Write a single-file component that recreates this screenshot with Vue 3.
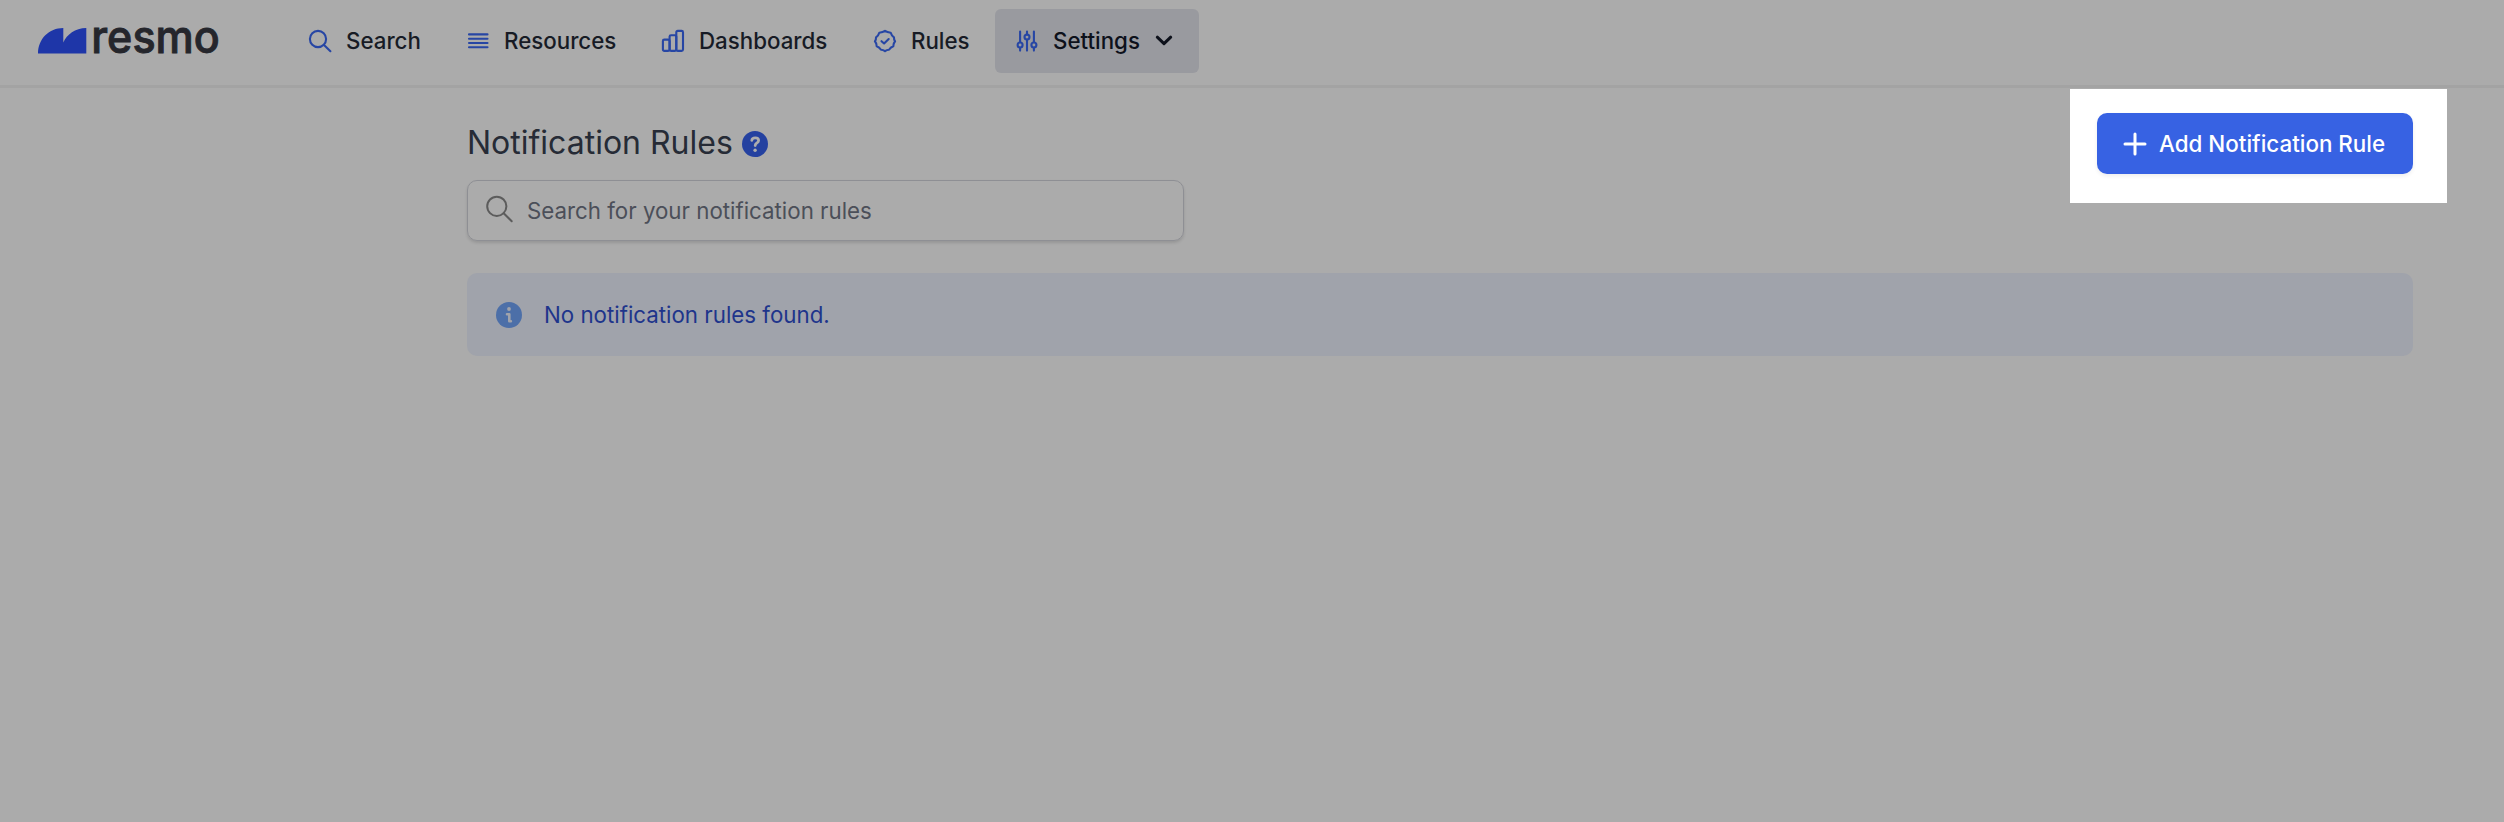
<script setup>
const nav = [
  { id: 'search', label: 'Search' },
  { id: 'resources', label: 'Resources' },
  { id: 'dashboards', label: 'Dashboards' },
  { id: 'rules', label: 'Rules' },
  { id: 'settings', label: 'Settings' },
]
</script>

<template>
  <div class="page">
    <header class="header">
      <svg class="logo" width="190" height="72" viewBox="0 0 190 72">
        <path d="M0 53.5C0 39 11 28 25.300 28V42.500C29 34.500 37 28 48.300 28V53.500Z" fill="#1e36a8" />
        <text x="53.300" y="53.400" textLength="128.500" lengthAdjust="spacingAndGlyphs">resmo</text>
      </svg>
      <nav class="nav">
        <a v-for="item in nav" :key="item.id" class="item" :class="item.id">
          <svg v-if="item.id === 'search'" class="icon" viewBox="0 0 24 24">
            <circle cx="10" cy="10" r="8.1" /><path d="M16 16l6.4 6.2" />
          </svg>
          <svg v-else-if="item.id === 'resources'" class="icon" viewBox="0 0 24 24">
            <path d="M3 5.400h18.500M3 9.700h18.500M3 14h18.500M3 18.300h18.500" />
          </svg>
          <svg v-else-if="item.id === 'dashboards'" class="icon" viewBox="0 0 24 24">
            <rect x="1.9" y="10.6" width="6.7" height="11.3" rx="1.4" />
            <rect x="8.6" y="6.2" width="6.7" height="15.7" rx="1.4" />
            <rect x="15.3" y="1.9" width="6.7" height="20" rx="1.4" />
          </svg>
          <svg v-else-if="item.id === 'rules'" class="icon" viewBox="0 0 24 24">
            <path d="M12 1.900Q14 3.400 17.700 3.700Q18.500 6.500 21 8.300Q20.800 10.500 22.100 12.300Q20.300 14.400 20.300 17.300Q17.600 18.200 16 20.700Q13.800 20.700 12 22.100Q10.200 20.700 8 20.700Q6.400 18.200 3.700 17.300Q3.700 14.400 1.900 12.300Q3.200 10.500 3 8.300Q5.500 6.500 6.300 3.700Q10 3.400 12 1.900Z" />
            <path d="M8.500 12.200l2.600 2.300 4.600-4.500" />
          </svg>
          <svg v-else class="icon" viewBox="0 0 24 24">
            <path d="M5.100 2.500V13M5.100 19v2.600M12 2.500V5.200M12 11v10.600M18.900 2.500V13M18.900 19v2.600" />
            <circle cx="5.100" cy="16" r="2.500" /><circle cx="12" cy="8.100" r="2.500" /><circle cx="18.900" cy="16" r="2.500" />
          </svg>
          <span class="label">{{ item.label }}</span>
          <svg v-if="item.id === 'settings'" class="chevron" width="18" height="12" viewBox="0 0 18 12">
            <path d="M2.300 2.200L9 8.700L15.700 2.200" />
          </svg>
        </a>
      </nav>
    </header>

    <main class="main">
      <div class="top">
        <div class="intro">
          <h1>
            <span>Notification Rules</span>
            <svg class="help" width="26" height="26" viewBox="0 0 26 26">
              <circle cx="13" cy="13" r="13" fill="#2441a0" />
              <path d="M9.800 9.300C10.200 6 16.600 6 16.600 9.400C16.600 12 13.200 11.800 13.200 14.500" fill="none" stroke="#adadad" stroke-width="2.800" stroke-linecap="round" />
              <circle cx="13.100" cy="19.300" r="1.700" fill="#adadad" />
            </svg>
          </h1>
          <div class="search-box">
            <svg width="28" height="28" viewBox="0 0 28 28">
              <circle cx="10.800" cy="11.300" r="9.600" /><path d="M17.700 18.200L25.700 26.200" />
            </svg>
            <span>Search for your notification rules</span>
          </div>
        </div>
        <div class="spotlight">
          <button class="add">
            <svg width="24" height="24" viewBox="0 0 24 24"><path d="M12 2v20M2 12h20" /></svg>
            <span>Add Notification Rule</span>
          </button>
        </div>
      </div>
      <div class="alert">
        <svg width="26" height="26" viewBox="0 0 26 26">
          <circle cx="13" cy="13" r="13" fill="#4c6fa8" />
          <circle cx="13" cy="7" r="1.900" fill="#a0a3ab" />
          <path d="M11 12.200h2.300v7h1.600" fill="none" stroke="#a0a3ab" stroke-width="2.600" stroke-linecap="round" stroke-linejoin="round" />
        </svg>
        <span>No notification rules found.</span>
      </div>
    </main>
  </div>
</template>

<style>
body {
  background: #ababab;
}
</style>

<style scoped>
.page {
  height: 822px;
  overflow: hidden;
  background: #ababab;
  font-family: Inter, "Liberation Sans", sans-serif;
  font-size: 22.300px;
}
svg {
  display: block;
  flex: none;
}
span {
  white-space: nowrap;
}
.header {
  box-sizing: border-box;
  height: 88px;
  padding-left: 38px;
  border-bottom: 3px solid #a3a3a3;
  display: flex;
  align-items: flex-start;
}
.logo text {
  font-size: 45px;
  font-weight: 500;
  fill: #25262c;
  stroke: #25262c;
  stroke-width: 0.900;
}
.nav {
  display: flex;
  margin: 9px 0 0 58px;
}
.item {
  box-sizing: border-box;
  display: flex;
  align-items: center;
  height: 64px;
  padding-left: 22px;
  border-radius: 6px;
  color: #171b25;
  font-weight: 500;
}
.label {
  margin-top: -1px;
}
.item.search { width: 158px; }
.item.resources { width: 195px; }
.item.dashboards { width: 212px; }
.item.rules { width: 144px; }
.item.settings {
  width: 204px;
  padding-left: 20px;
  background: #999a9f;
  color: #0d111b;
}
.icon {
  width: 24px;
  height: 24px;
  margin-right: 14px;
  fill: none;
  stroke: #2746a4;
  stroke-width: 2.100;
  stroke-linecap: round;
  stroke-linejoin: round;
}
.chevron {
  margin-left: 15px;
  fill: none;
  stroke: #0d111b;
  stroke-width: 3;
  stroke-linecap: round;
  stroke-linejoin: round;
}
.main {
  padding: 1px 91px 0 467px;
}
.top {
  display: flex;
  justify-content: space-between;
  align-items: flex-start;
  margin-right: -34px;
}
.intro {
  padding-top: 33px;
}
h1 {
  display: flex;
  align-items: center;
  height: 40px;
  margin: 0 0 18px;
  font-size: 32px;
  font-weight: 400;
  color: #262b36;
}
.help {
  margin: 3px 0 0 9px;
}
.search-box {
  box-sizing: border-box;
  display: flex;
  align-items: center;
  width: 717px;
  height: 61px;
  padding-left: 18px;
  border: 1px solid #8e8f94;
  border-radius: 10px;
  box-shadow: 0 2px 3px rgba(0, 0, 0, 0.120);
  color: #4b4f59;
}
.search-box svg {
  margin: -3px 13px 0 0;
  fill: none;
  stroke: #5c5c5c;
  stroke-width: 2;
  stroke-linecap: round;
}
.spotlight {
  box-sizing: border-box;
  width: 377px;
  height: 114px;
  padding: 24px 0 0 27px;
  background: #fff;
}
.add {
  box-sizing: border-box;
  display: flex;
  align-items: center;
  width: 316px;
  height: 61px;
  padding: 0 0 0 26px;
  border: 0;
  border-radius: 10px;
  background: #3762e3;
  box-shadow: 0 2px 4px rgba(0, 0, 0, 0.070);
  color: #fff;
  font: 500 22.400px Inter, "Liberation Sans", sans-serif;
}
.add svg {
  margin-right: 12px;
  fill: none;
  stroke: #fff;
  stroke-width: 3;
  stroke-linecap: round;
}
.alert {
  box-sizing: border-box;
  display: flex;
  align-items: center;
  height: 83px;
  margin-top: 32px;
  padding-left: 29px;
  border-radius: 10px;
  background: #a0a3ab;
  color: #1e358b;
}
.alert svg {
  margin-right: 22px;
}
</style>
